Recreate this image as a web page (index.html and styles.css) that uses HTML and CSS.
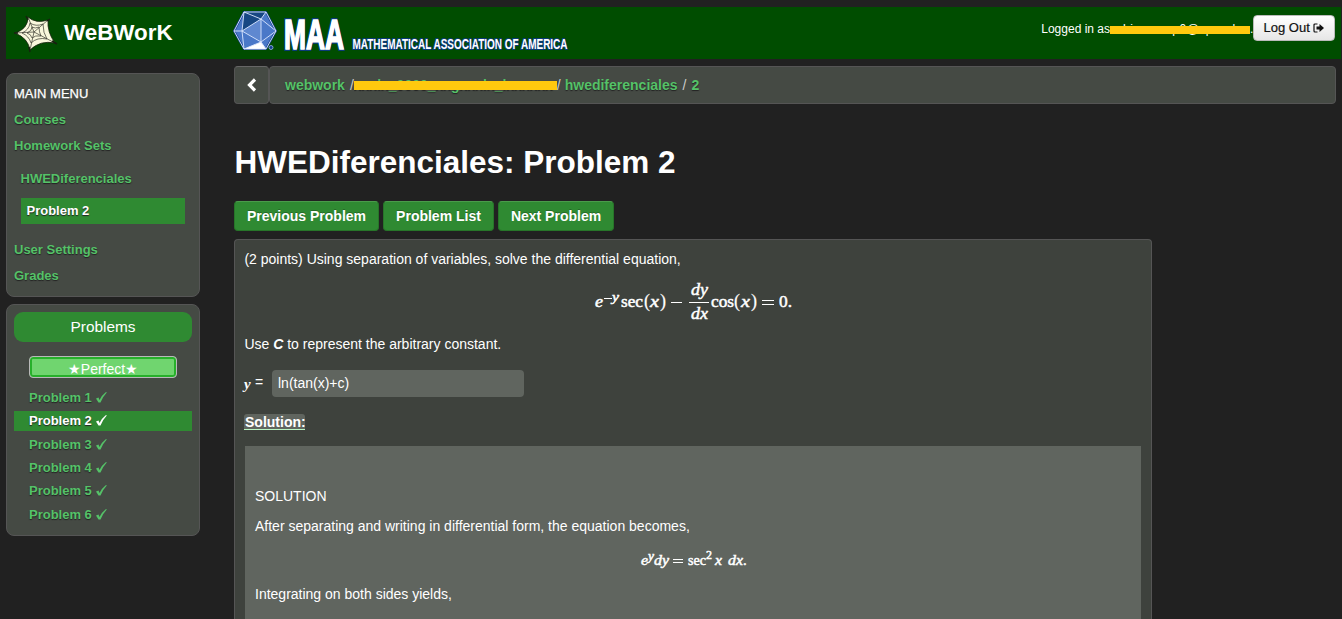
FILE: index.html
```html
<!DOCTYPE html>
<html lang="en">
<head>
<meta charset="utf-8">
<title>WeBWorK : HWEDiferenciales : 2</title>
<link rel="stylesheet" href="styles.css">
</head>
<body>
<header class="masthead">
  <div class="brand">
    <svg class="web-logo" width="44" height="38" viewBox="0 0 44 38">
      <path d="M14 2 Q22 9 34 5 Q33 17 41 28 Q26 25 16 35 Q14 23 1 18 Q14 14 14 2Z" fill="#f9f7dc" stroke="#17200f" stroke-width=".8"/>
      <g fill="none" stroke="#35352c" stroke-width=".7">
        <path d="M14 2 L20 17 L34 5 M20 17 L41 28 M20 17 L16 35 M20 17 L1 18"/>
        <path d="M16 8 Q22 12 29 9 Q29 18 33 24 Q23 22 17 28 Q15 21 8 18 Q15 15 16 8Z"/>
        <path d="M18 12 Q21 14 25 12 Q25 17 27 21 Q21 20 18 23 Q17 19 13 18 Q18 16 18 12Z"/>
      </g>
      <path d="M12 1l2 4M36 4l-3 2M38 26l5 3M15 32l1 5M0 18h4" stroke="#17200f" stroke-width="1.500"/>
    </svg>
    <span class="brand-name">WeBWorK</span>
  </div>
  <svg class="maa" width="340" height="44" viewBox="0 0 340 44">
    <path d="M11 2 L33 2 L43 21 L33 39 L11 39 L1 21Z" fill="#4a78c8" stroke="#123c8c" stroke-width="2"/>
    <path d="M11 2 L33 2 L28 9Z M11 2 L28 9 L9 21Z" fill="#174783"/>
    <path d="M28 9 L28 32 L9 21Z" fill="#5f88d0"/>
    <path d="M11 39 L28 32 L33 39Z" fill="#fff"/>
    <path d="M11 2 L33 2 L43 21 L33 39 L11 39 L1 21Z M11 2 L28 9 L33 2 M11 2 L9 21 L1 21 M9 21 L28 9 L43 21 L28 32 L9 21 L11 39 L28 32 L33 39 M28 9 V32" fill="none" stroke="#dce8ff" stroke-width=".9"/>
    <circle cx="38" cy="37.500" r="2" fill="#123c8c" stroke="#9db9ed" stroke-width=".8"/>
    <text class="maa-big halo" x="51" y="39" textLength="60" lengthAdjust="spacingAndGlyphs">MAA</text>
    <text class="maa-big" x="51" y="39" textLength="60" lengthAdjust="spacingAndGlyphs">MAA</text>
    <text class="maa-small" x="119.500" y="38.500" textLength="215" lengthAdjust="spacingAndGlyphs">MATHEMATICAL ASSOCIATION OF AMERICA</text>
  </svg>
  <div class="login">
    <span>Logged in as</span><span class="hidden-user">xxhixxxxxxp0@xpxxxk<i class="bar"></i></span><span class="dot">.</span>
    <a class="logout">Log Out
      <svg width="12" height="10" viewBox="0 0 12 10"><path d="M4.500 1H2Q1 1 1 2v6q0 1 1 1h2.500" fill="none" stroke="#111" stroke-width="1.200"/><path d="M3.500 3.500h3V1L11 5 6.500 9V6.500h-3z" fill="#111"/></svg>
    </a>
  </div>
</header>
<div class="body-row">
  <aside class="sidebar">
    <nav class="panel menu">
      <h2 class="menu-title">MAIN MENU</h2>
      <a>Courses</a>
      <a>Homework Sets</a>
      <div class="submenu"><a>HWEDiferenciales</a><a class="current">Problem 2</a></div>
      <a>User Settings</a>
      <a>Grades</a>
    </nav>
    <nav class="panel problems">
      <h2 class="problems-title">Problems</h2>
      <div class="progress">★Perfect★</div>
      <ul class="problem-list">
        <li>Problem 1 <svg class="check" viewBox="0 0 11 11"><path d="M0 6.500l2.500-1 1 2.500Q6 3 10 0l.8.600Q7 4.500 4.500 10.500H2.500z"/></svg></li>
        <li class="active">Problem 2 <svg class="check" viewBox="0 0 11 11"><path d="M0 6.500l2.500-1 1 2.500Q6 3 10 0l.8.600Q7 4.500 4.500 10.500H2.500z"/></svg></li>
        <li>Problem 3 <svg class="check" viewBox="0 0 11 11"><path d="M0 6.500l2.500-1 1 2.500Q6 3 10 0l.8.600Q7 4.500 4.500 10.500H2.500z"/></svg></li>
        <li>Problem 4 <svg class="check" viewBox="0 0 11 11"><path d="M0 6.500l2.500-1 1 2.500Q6 3 10 0l.8.600Q7 4.500 4.500 10.500H2.500z"/></svg></li>
        <li>Problem 5 <svg class="check" viewBox="0 0 11 11"><path d="M0 6.500l2.500-1 1 2.500Q6 3 10 0l.8.600Q7 4.500 4.500 10.500H2.500z"/></svg></li>
        <li>Problem 6 <svg class="check" viewBox="0 0 11 11"><path d="M0 6.500l2.500-1 1 2.500Q6 3 10 0l.8.600Q7 4.500 4.500 10.500H2.500z"/></svg></li>
      </ul>
    </nav>
  </aside>
  <main class="content">
    <div class="crumbs">
      <a class="back"><svg width="10" height="14" viewBox="0 0 10 14"><path d="M8 1.500 2.500 7 8 12.500" fill="none" stroke="#fff" stroke-width="3.200"/></svg></a>
      <div class="trail">
        <a>webwork</a><span class="slash first">/</span><a class="hidden-course">xxxlx_0000_xxgxxxlx_lxxxxxx<i class="bar"></i></a><span class="slash second">/</span><a>hwediferenciales</a><span class="slash third">/</span><a>2</a>
      </div>
    </div>
    <h1 class="title">HWEDiferenciales: Problem 2</h1>
    <div class="buttons"><a class="btn prev">Previous Problem</a><a class="btn list">Problem List</a><a class="btn next">Next Problem</a></div>
    <section class="problem">
      <p class="statement">(2 points) Using separation of variables, solve the differential equation,</p>
      <svg class="math eq-main" width="202" height="44" viewBox="0 0 202 44">
        <text class="it" x="1" y="25" textLength="8" lengthAdjust="spacingAndGlyphs">e</text>
        <path d="M10 16.500h8"/>
        <text class="it sup" x="18" y="19" textLength="7" lengthAdjust="spacingAndGlyphs">y</text>
        <text x="27" y="25" textLength="22" lengthAdjust="spacingAndGlyphs">sec</text>
        <text class="paren" x="50" y="25">(</text>
        <text class="it" x="56" y="25" textLength="9" lengthAdjust="spacingAndGlyphs">x</text>
        <text class="paren" x="66" y="25">)</text>
        <path d="M77 20.500h11"/>
        <text class="it" x="97" y="13" textLength="17" lengthAdjust="spacingAndGlyphs">dy</text>
        <path d="M95 20.500h20"/>
        <text class="it" x="97" y="37" textLength="17" lengthAdjust="spacingAndGlyphs">dx</text>
        <text x="117" y="25" textLength="23" lengthAdjust="spacingAndGlyphs">cos</text>
        <text class="paren" x="140" y="25">(</text>
        <text class="it" x="147" y="25" textLength="9" lengthAdjust="spacingAndGlyphs">x</text>
        <text class="paren" x="157" y="25">)</text>
        <path d="M168 18.500h12M168 22.500h12"/>
        <text x="185" y="25" textLength="13" lengthAdjust="spacingAndGlyphs">0.</text>
      </svg>
      <p class="constant">Use <b><i>C</i></b> to represent the arbitrary constant.</p>
      <div class="answer">
        <span class="var">y</span><span class="equals">=</span><input class="field" value="ln(tan(x)+c)">
      </div>
      <a class="solution-link">Solution:</a>
      <div class="solution">
        <p class="s-head">SOLUTION</p>
        <p class="s-after">After separating and writing in differential form, the equation becomes,</p>
        <svg class="math small eq-sol" width="110" height="26" viewBox="0 0 110 26">
          <text class="it" x="1" y="18" textLength="7" lengthAdjust="spacingAndGlyphs">e</text>
          <text class="it sup" x="8" y="13" textLength="6" lengthAdjust="spacingAndGlyphs">y</text>
          <text class="it" x="14" y="18" textLength="15" lengthAdjust="spacingAndGlyphs">dy</text>
          <path d="M33 12.500h10M33 15.500h10"/>
          <text x="48" y="18" textLength="18" lengthAdjust="spacingAndGlyphs">sec</text>
          <text class="sup" x="66" y="12">2</text>
          <text class="it" x="75" y="18" textLength="7" lengthAdjust="spacingAndGlyphs">x</text>
          <text class="it" x="88" y="18" textLength="15" lengthAdjust="spacingAndGlyphs">dx</text>
          <text x="103" y="18">.</text>
        </svg>
        <p class="s-after">Integrating on both sides yields,</p>
      </div>
    </section>
  </main>
</div>
</body>
</html>
```

FILE: styles.css
```css
* { box-sizing: border-box; }
html, body { height: 100%; overflow: hidden; }
body {
  margin: 0;
  padding: 7px 0 0 6px;
  background: #212121;
  color: #fff;
  font: 14px/20px "Liberation Sans", Arial, sans-serif;
}
h1, h2, p, ul { margin: 0; padding: 0; }
.masthead {
  display: flex;
  align-items: flex-start;
  width: 1335px;
  height: 52px;
  background: #004d00;
}
.brand { display: flex; width: 227px; padding: 8px 0 0 8px; }
.web-logo { flex: none; }
.brand-name { margin-left: 6px; font-size: 22.4px; line-height: 35px; font-weight: bold; }
.maa { margin-top: 3px; overflow: visible; flex: none; }
.maa text { fill: #fff; stroke: #0b3a7a; stroke-width: 2px; paint-order: stroke; font-family: "Liberation Sans", Arial, sans-serif; font-weight: bold; }
.maa .maa-big { font-size: 42px; stroke: #fff; stroke-width: 1.6px; }
.maa .maa-big.halo { stroke: #0b3a7a; stroke-width: 4px; }
.maa-small { font-size: 14px; }
.login { display: flex; margin-left: auto; padding: 8px 6px 0 0; font-size: 12px; line-height: 28px; }
.hidden-user, .hidden-course { position: relative; overflow: hidden; white-space: nowrap; }
.hidden-user { width: 140px; letter-spacing: .5px; }
.dot { width: 3px; }
.bar { position: absolute; left: 0; right: 0; background: #ffc90e; }
.hidden-user .bar { top: 11px; height: 8px; }
.logout {
  display: flex;
  align-items: center;
  gap: 3px;
  width: 82px;
  height: 26px;
  padding-left: 9.5px;
  border: 1px solid #bbb;
  border-radius: 4px;
  background: linear-gradient(#fff, #e6e6e6);
  color: #111;
  font-size: 13px;
  -webkit-text-stroke: .2px #111;
}
.body-row { display: flex; align-items: flex-start; }
.sidebar { width: 194px; margin: 14px 34px 0 0; display: flex; flex-direction: column; gap: 7px; flex: none; }
.panel { border: 1px solid #555; border-radius: 8px; background: #454a44; font-size: 13px; }
.menu { height: 224px; padding: 7px; display: flex; flex-direction: column; }
.menu-title { font-size: 13px; line-height: 25px; font-weight: normal; height: 26px; -webkit-text-stroke: .25px #fff; }
.menu a { color: #55c268; font-weight: bold; line-height: 26px; text-shadow: 0 1px 1px #222; }
.submenu { display: flex; flex-direction: column; gap: 6px; margin: 7px 7px 13px 6.5px; }
.menu .submenu .current { padding-left: 6px; background: #2f8a32; color: #fff; }
.problems { height: 232px; padding: 7px; }
.problems-title { height: 30px; border-radius: 9px; background: #2f8a32; font-size: 15.4px; line-height: 30px; font-weight: normal; text-align: center; }
.progress {
  width: 148px;
  height: 22px;
  margin: 14px 0 10px 15px;
  border: 1px solid #b9b9b9;
  border-radius: 4px;
  box-shadow: inset 0 0 0 2px #27b02b;
  background: #70d56f;
  font-size: 14px;
  line-height: 24px;
  text-align: center;
}
.problem-list { list-style: none; }
.problem-list li { display: flex; align-items: center; gap: 4px; height: 20px; margin-bottom: 3.35px; padding-left: 15px; color: #55c268; font-weight: bold; line-height: 18px; text-shadow: 0 1px 1px #222; }
.problem-list .active { background: #2f8a32; color: #fff; }
.check { width: 11px; height: 11px; margin-top: -1px; fill: currentColor; }
.content { width: 1102px; padding-top: 7px; }
.crumbs { display: flex; height: 38px; }
.back { display: flex; align-items: center; justify-content: center; width: 35px; border: 1px solid #555; border-top-color: #666; border-radius: 4px; background: #454a44; }
.trail { display: flex; flex: 1; padding-left: 15px; border: 1px solid #555; border-radius: 4px; background: #454a44; line-height: 36px; }
.trail a { color: #55c268; font-weight: bold; text-shadow: 0 1px 1px #222; }
.slash { color: #ccc; }
.first { margin-left: 5px; }
.hidden-course { width: 203px; }
.hidden-course .bar { top: 14px; height: 9px; }
.second { margin-right: 4px; }
.third { margin: 0 5px; }
.title { margin-top: 38px; padding-left: .5px; font-size: 31.5px; line-height: 40px; }
.buttons { display: flex; gap: 4px; margin-top: 19px; }
.btn { height: 30px; border: 1px solid #277529; border-top-color: #4a9b4b; border-radius: 4px; background: #2f8a32; font-weight: bold; line-height: 28px; text-align: center; text-shadow: 0 -1px 0 #256a27; }
.prev { width: 145px; }
.list { width: 111px; }
.next { width: 116px; }
.problem { width: 918px; height: 380px; margin-top: 8px; padding: 9px 10px 0 9px; border: 1px solid #555; border-bottom: 0; border-radius: 4px 4px 0 0; background: #3e423d; }
.statement, .constant { padding-left: .4px; }
.math { display: block; overflow: visible; }
.math text { fill: #fff; stroke: #fff; stroke-width: .5px; font: 17px "Liberation Serif", serif; }
.math path { stroke: #fff; fill: none; }
.math .it { font-style: italic; }
.math .sup { font-size: 13px; }
.math .paren { font-size: 18px; stroke-width: .2px; }
.math.small text { font-size: 14.5px; }
.math.small .sup { font-size: 12px; }
.eq-main { margin: 13px 0 0 349.5px; }
.constant { margin-top: 8px; }
.answer { display: flex; align-items: center; height: 27px; margin-top: 16px; }
.var { width: 11px; font: italic bold 15px/20px "Liberation Serif", serif; }
.equals { width: 17px; margin-top: -3px; }
.field { width: 252px; height: 27px; padding: 0 6px 1px; border: 0; border-radius: 4px; background: #60655f; color: #fff; font: 14px "Liberation Sans", Arial, sans-serif; }
.solution-link { display: block; width: 61px; height: 16px; margin-top: 17px; padding-left: 1px; border-bottom: 1px solid #b9f5c3; border-radius: 3px 3px 0 0; background: #60655f; font-weight: bold; line-height: 16px; }
.solution { height: 173px; margin: 16px 0 0 1px; padding: 40px 10px 0; background: #60655f; }
.s-after { margin-top: 10px; }
.eq-sol { margin: 11px 0 0 384.5px; }
.eq-sol + .s-after { margin-top: 11px; }
```
